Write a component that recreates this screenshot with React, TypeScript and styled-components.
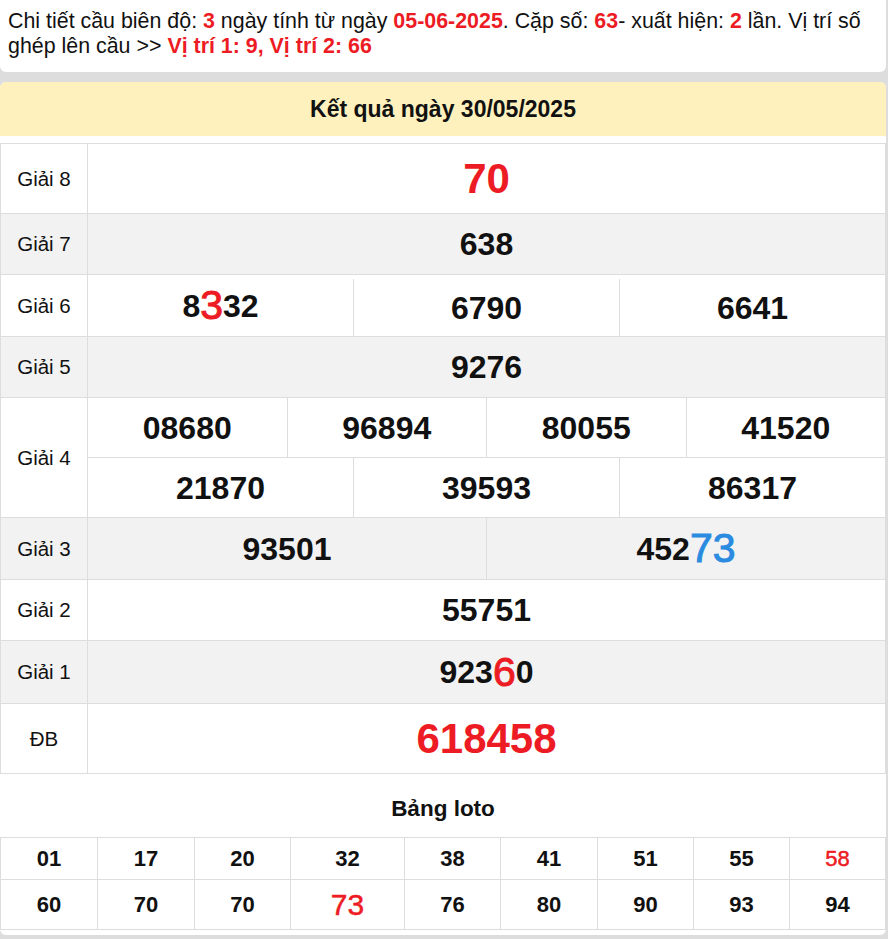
import React from 'react'
import styled, {createGlobalStyle} from 'styled-components'

const colors = {
    red: '#ED1C24',
    blue: '#2A8BE0',
    text: '#111111',
    line: '#DDDDDD',
    alt: '#F2F2F2',
    yellow: '#FEF1BE',
    page: '#DDDDDD',
}

const GlobalStyle = createGlobalStyle`
    html, body {
        margin: 0;
        padding: 0;
        background: ${colors.page};
        font-family: "Liberation Sans", Arial, sans-serif;
        color: ${colors.text};
    }
    * { box-sizing: border-box; }
`

const Page = styled.div`
    width: 886px;
    display: flex;
    flex-direction: column;
    gap: 10px;
`

const InfoCard = styled.div`
    background: #fff;
    border-radius: 0 0 6px 6px;
    padding: 9px 8px 13px;
    font-size: 21.4px;
    line-height: 25px;
`

const Hot = styled.b`
    color: ${colors.red};
`

const ResultCard = styled.div`
    background: #fff;
    border-radius: 6px;
    overflow: hidden;
    padding-bottom: 5px;
`

const DateHeader = styled.div`
    height: 54px;
    background: ${colors.yellow};
    display: flex;
    align-items: center;
    justify-content: center;
    font-size: 23px;
    font-weight: bold;
`

const Table = styled.div`
    margin-top: 7px;
    border: 1px solid ${colors.line};
    border-bottom: none;
    display: flex;
    flex-direction: column;
`

const Row = styled.div<{$alt?: boolean; $h: number}>`
    display: flex;
    height: ${_ => _.$h}px;
    background: ${_ => (_.$alt ? colors.alt : '#fff')};
    border-bottom: 1px solid ${colors.line};
`

const Label = styled.div`
    width: 87px;
    flex: none;
    border-right: 1px solid ${colors.line};
    display: flex;
    align-items: center;
    justify-content: center;
    font-size: 20.5px;
`

const Values = styled.div`
    flex: 1;
    display: flex;
    flex-direction: column;
`

const Line = styled.div<{$inset?: boolean}>`
    flex: 1;
    display: flex;
    & + & { border-top: 1px solid ${colors.line}; }
    & > * + * {
        border-left: 1px solid ${colors.line};
        margin-top: ${_ => (_.$inset ? '4px' : '0')};
    }
`

const Cell = styled.div<{$big?: boolean; $red?: boolean}>`
    flex: 1 1 0;
    display: flex;
    align-items: center;
    justify-content: center;
    font-weight: bold;
    font-size: ${_ => (_.$big ? 42 : 32)}px;
    color: ${_ => (_.$red ? colors.red : colors.text)};
    line-height: 1;
`

const Mark = styled.span<{$blue?: boolean}>`
    font-weight: normal;
    font-size: 41px;
    -webkit-text-stroke: 1px currentColor;
    color: ${_ => (_.$blue ? colors.blue : colors.red)};
`

const LotoTitle = styled.div`
    text-align: center;
    font-size: 22.5px;
    font-weight: bold;
    line-height: 25px;
    padding: 22px 0 16px;
`

const LotoGrid = styled.div`
    display: grid;
    grid-template-columns: 97px 97px 96px 114px 96px 97px 96px 96px 96px;
    grid-template-rows: 42px 50px;
    border-left: 1px solid ${colors.line};
    border-top: 1px solid ${colors.line};
`

const LotoCell = styled.div<{$hot?: boolean; $big?: boolean}>`
    border-right: 1px solid ${colors.line};
    border-bottom: 1px solid ${colors.line};
    display: flex;
    align-items: center;
    justify-content: center;
    font-size: ${_ => (_.$big ? 30 : 22)}px;
    font-weight: ${_ => (_.$hot ? 'normal' : 'bold')};
    -webkit-text-stroke: ${_ => (_.$hot ? '0.5px currentColor' : '0')};
    color: ${_ => (_.$hot ? colors.red : colors.text)};
`

const loto = ['01', '17', '20', '32', '38', '41', '51', '55', '58', '60', '70', '70', '73', '76', '80', '90', '93', '94']

export default function App() {
    return (
        <Page>
            <GlobalStyle />
            <InfoCard>
                Chi tiết cầu biên độ: <Hot>3</Hot> ngày tính từ ngày <Hot>05-06-2025</Hot>. Cặp số: <Hot>63</Hot>- xuất
                hiện: <Hot>2</Hot> lần. Vị trí số ghép lên cầu &gt;&gt; <Hot>Vị trí 1: 9, Vị trí 2: 66</Hot>
            </InfoCard>
            <ResultCard>
                <DateHeader>Kết quả ngày 30/05/2025</DateHeader>
                <Table>
                    <Row $h={70}>
                        <Label>Giải 8</Label>
                        <Values><Line><Cell $big $red>70</Cell></Line></Values>
                    </Row>
                    <Row $h={61} $alt>
                        <Label>Giải 7</Label>
                        <Values><Line><Cell>638</Cell></Line></Values>
                    </Row>
                    <Row $h={62}>
                        <Label>Giải 6</Label>
                        <Values>
                            <Line $inset>
                                <Cell>8<Mark>3</Mark>32</Cell>
                                <Cell>6790</Cell>
                                <Cell>6641</Cell>
                            </Line>
                        </Values>
                    </Row>
                    <Row $h={61} $alt>
                        <Label>Giải 5</Label>
                        <Values><Line><Cell>9276</Cell></Line></Values>
                    </Row>
                    <Row $h={120}>
                        <Label>Giải 4</Label>
                        <Values>
                            <Line>
                                <Cell>08680</Cell>
                                <Cell>96894</Cell>
                                <Cell>80055</Cell>
                                <Cell>41520</Cell>
                            </Line>
                            <Line>
                                <Cell>21870</Cell>
                                <Cell>39593</Cell>
                                <Cell>86317</Cell>
                            </Line>
                        </Values>
                    </Row>
                    <Row $h={62} $alt>
                        <Label>Giải 3</Label>
                        <Values>
                            <Line>
                                <Cell>93501</Cell>
                                <Cell>452<Mark $blue>73</Mark></Cell>
                            </Line>
                        </Values>
                    </Row>
                    <Row $h={61}>
                        <Label>Giải 2</Label>
                        <Values><Line><Cell>55751</Cell></Line></Values>
                    </Row>
                    <Row $h={63} $alt>
                        <Label>Giải 1</Label>
                        <Values><Line><Cell>923<Mark>6</Mark>0</Cell></Line></Values>
                    </Row>
                    <Row $h={70}>
                        <Label>ĐB</Label>
                        <Values><Line><Cell $big $red>618458</Cell></Line></Values>
                    </Row>
                </Table>
                <LotoTitle>Bảng loto</LotoTitle>
                <LotoGrid>
                    {loto.map((n, i) => (
                        <LotoCell key={i} $hot={n === '58' || n === '73'} $big={n === '73'}>
                            {n}
                        </LotoCell>
                    ))}
                </LotoGrid>
            </ResultCard>
        </Page>
    )
}
